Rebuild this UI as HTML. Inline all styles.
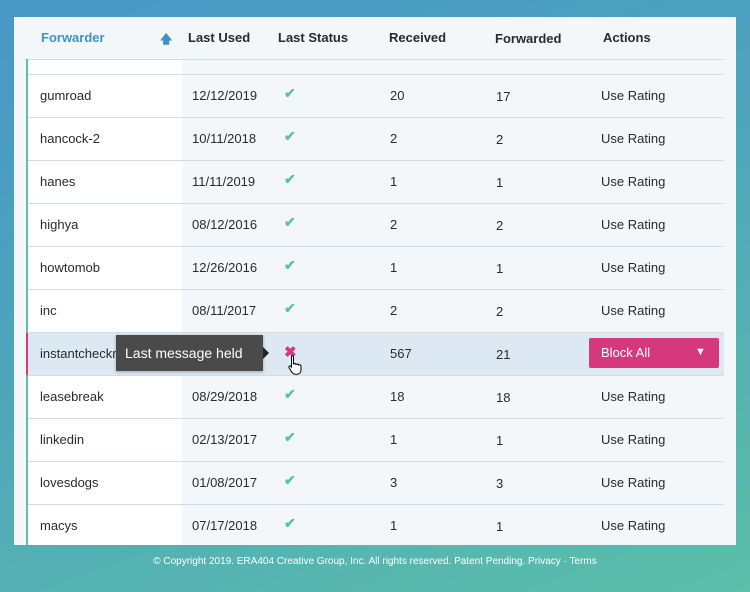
<!DOCTYPE html>
<html><head><style>
body{margin:0;width:750px;height:592px;overflow:hidden;background:linear-gradient(160deg,#4897c6 0%,#4ea6bb 45%,#5bbfa9 100%);font-family:"Liberation Sans",sans-serif;position:relative}
.panel{position:absolute;left:14px;top:17px;width:722px;height:528px;background:#f4f7fa;overflow:hidden}
.hdr{position:absolute;top:0;left:0;right:0;height:42px;font-weight:bold;font-size:13px;color:#2a2a2a}
.hdr span{position:absolute;top:13px}
.fcol{position:absolute;left:12px;top:42px;width:154px;height:490px;background:#fff;border-left:2px solid #5cc2a2}
.row{position:absolute;left:12px;width:696px;height:42px;border-top:1px solid #d3dbe3;font-size:13px;color:#2a2a2a}
.row span{position:absolute;top:13px}
.ck{color:#5cc2a2;font-size:14px;top:10px!important;font-weight:bold}
</style></head><body>
<div class="panel">
<div class="hdr"><span style="left:27px;color:#3e93c6">Forwarder</span><span style="left:146px;color:#3e93c6;font-size:12px">🡅</span><span style="left:174px">Last Used</span><span style="left:264px">Last Status</span><span style="left:375px">Received</span><span style="left:481px;top:14px">Forwarded</span><span style="left:589px">Actions</span></div>
<div class="fcol"></div>
<div class="row" style="top:42px;height:14px;border-top:1px solid #d3dbe3;left:14px"></div>
<div id="rows"></div>
</div>
<div style="position:absolute;top:556px;width:750px;text-align:center;color:#fff;font-size:10px">© Copyright 2019. ERA404 Creative Group, Inc. All rights reserved. Patent Pending. Privacy · Terms</div>
<script>
var d=[["gumroad","12/12/2019","20","17"],["hancock-2","10/11/2018","2","2"],["hanes","11/11/2019","1","1"],["highya","08/12/2016","2","2"],["howtomob","12/26/2016","1","1"],["inc","08/11/2017","2","2"],["instantcheckmate","","567","21"],["leasebreak","08/29/2018","18","18"],["linkedin","02/13/2017","1","1"],["lovesdogs","01/08/2017","3","3"],["macys","07/17/2018","1","1"]];
var h="";d.forEach(function(r,i){var t=57+i*43,sel=i==6;
h+='<div class="row" style="top:'+t+'px;'+(sel?'background:#dde9f2;border-left:2px solid #d6387e;left:12px;':'left:14px;')+'">'+
'<span style="left:12px'+(sel?';left:12px':'')+'">'+r[0]+'</span>'+(sel?'':'<span style="left:164px">'+r[1]+'</span>')+
(sel?'<span style="left:256px;top:10px;color:#d6387e;font-weight:bold;font-size:15px">✖</span>':'<span class="ck" style="left:256px">✔</span>')+
'<span style="left:362px">'+r[2]+'</span><span style="left:468px;top:14px">'+r[3]+'</span>'+
(sel?'<div style="position:absolute;left:561px;top:5px;width:130px;height:30px;background:#d6387e;border-radius:2px;color:#fff"><span style="left:12px;top:7px">Block All</span><span style="left:106px;top:8px;font-size:11px">▼</span></div>':'<span style="left:573px">Use Rating</span>')+'</div>';});
document.getElementById("rows").innerHTML=h+'<div style="position:absolute;left:102px;top:318px;width:147px;height:36px;background:#4a4a4a;color:#fff;font-size:14px;line-height:36px;text-indent:9px;box-shadow:0 1px 3px rgba(0,0,0,.3)">Last message held</div><div style="position:absolute;left:249px;top:330px;border-left:6px solid #222;border-top:6px solid transparent;border-bottom:6px solid transparent"></div><svg style="position:absolute;left:274px;top:337px" width="16" height="22" viewBox="0 0 16 22"><path d="M4 1.5c1 0 1.5.6 1.5 1.5v7l1-.5c1 0 1.5.5 1.5 1l1-.5c1 0 1.5.5 1.5 1l1-.3c1 0 1.5.6 1.5 1.5v4c0 2-1.5 4-4 4H7c-1.5 0-2.5-1-3.5-2.5L1 13.5c-.5-1 .5-2 1.5-1.5l1 1V3c0-1 .5-1.5.5-1.5z" fill="#fff" stroke="#000" stroke-width="1"/></svg>';
</script>
</body></html>
